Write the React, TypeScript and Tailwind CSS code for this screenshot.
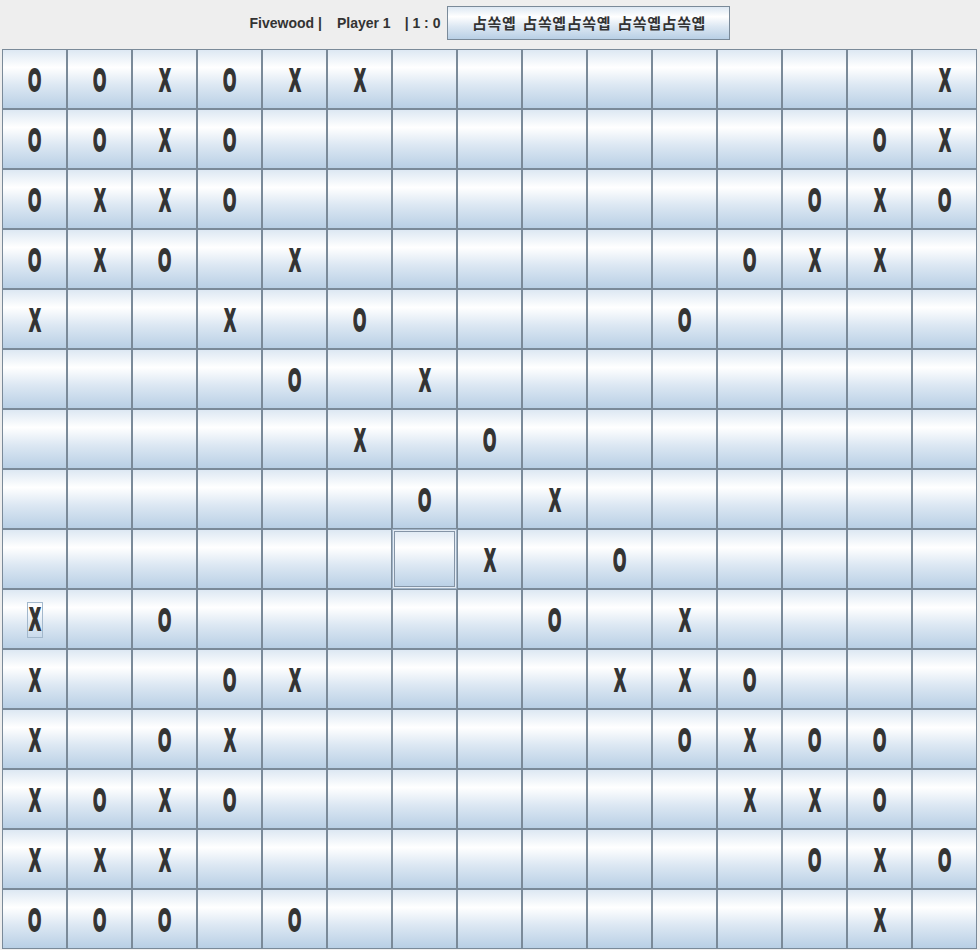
const board = [
  "OOXOXX________X",
  "OOXO_________OX",
  "OXXO________OXO",
  "OXO_X______OXX_",
  "X__X_O____O____",
  "____O_X________",
  "_____X_O_______",
  "______O_X______",
  "_______X_O_____",
  "X_O_____O_X____",
  "X__OX____XXO___",
  "X_OX______OXOO_",
  "XOXO_______XXO_",
  "XXX_________OXO",
  "OOO_O________X_",
]

const gradient =
  "bg-[linear-gradient(to_bottom,#dde8f3_0%,#ffffff_30%,#dde8f3_60%,#b8cfe5_100%)]"

function Mark({ value, focused }: { value: string; focused: boolean }) {
  const glyph = (
    <span className="inline-block scale-x-[0.55] scale-y-[1.05] font-['Liberation_Sans',Arial,sans-serif] text-[30px] font-bold leading-none text-[#333333] [-webkit-text-stroke:2px_#333333]">
      {value}
    </span>
  )
  if (focused) {
    return (
      <span className="mt-[2px] ml-[1px] flex h-[36px] w-[16px] items-center justify-center border border-[#a3b8cc]">
        {glyph}
      </span>
    )
  }
  return <span className="mt-[4px] ml-[1px] flex items-center justify-center">{glyph}</span>
}

function Cell({ value, row, col }: { value: string; row: number; col: number }) {
  const rollover = row === 8 && col === 6
  const focused = row === 9 && col === 0
  return (
    <div
      className={
        "flex items-center justify-center border " +
        gradient +
        (rollover
          ? " border-[#9fb2c6] shadow-[inset_0_0_0_1px_#e4ecf4,inset_0_0_0_2px_#8494a6]"
          : " border-[#7a8a99]")
      }
    >
      {value !== "_" && <Mark value={value} focused={focused} />}
    </div>
  )
}

export default function App() {
  return (
    <div className="h-[950px] w-[980px] overflow-hidden bg-[#eeeeee]">
      <header className="flex h-[49px] items-start justify-center pt-[6px]">
        <div className="flex h-[34px] items-center font-['Liberation_Sans',Arial,sans-serif] text-[14px] font-bold text-[#333333]">
          <span>Fivewood |</span>
          <span className="ml-[15px]">Player 1</span>
          <span className="ml-[14px]">| 1 : 0</span>
          <button
            className={
              "ml-[7px] flex h-[34px] w-[283px] items-center justify-center border border-[#7a8a99] font-['Noto_Sans_CJK_KR',sans-serif] text-[15px] font-bold tracking-[0.6px] text-[#333333] [word-spacing:2px] " +
              gradient
            }
          >
            占쏙옙 占쏙옙占쏙옙 占쏙옙占쏙옙
          </button>
        </div>
      </header>
      <main className="ml-[2px] grid grid-cols-[repeat(15,65px)] grid-rows-[repeat(15,60px)]">
        {board.map((line, r) =>
          line.split("").map((v, c) => <Cell key={r + "-" + c} value={v} row={r} col={c} />)
        )}
      </main>
    </div>
  )
}
